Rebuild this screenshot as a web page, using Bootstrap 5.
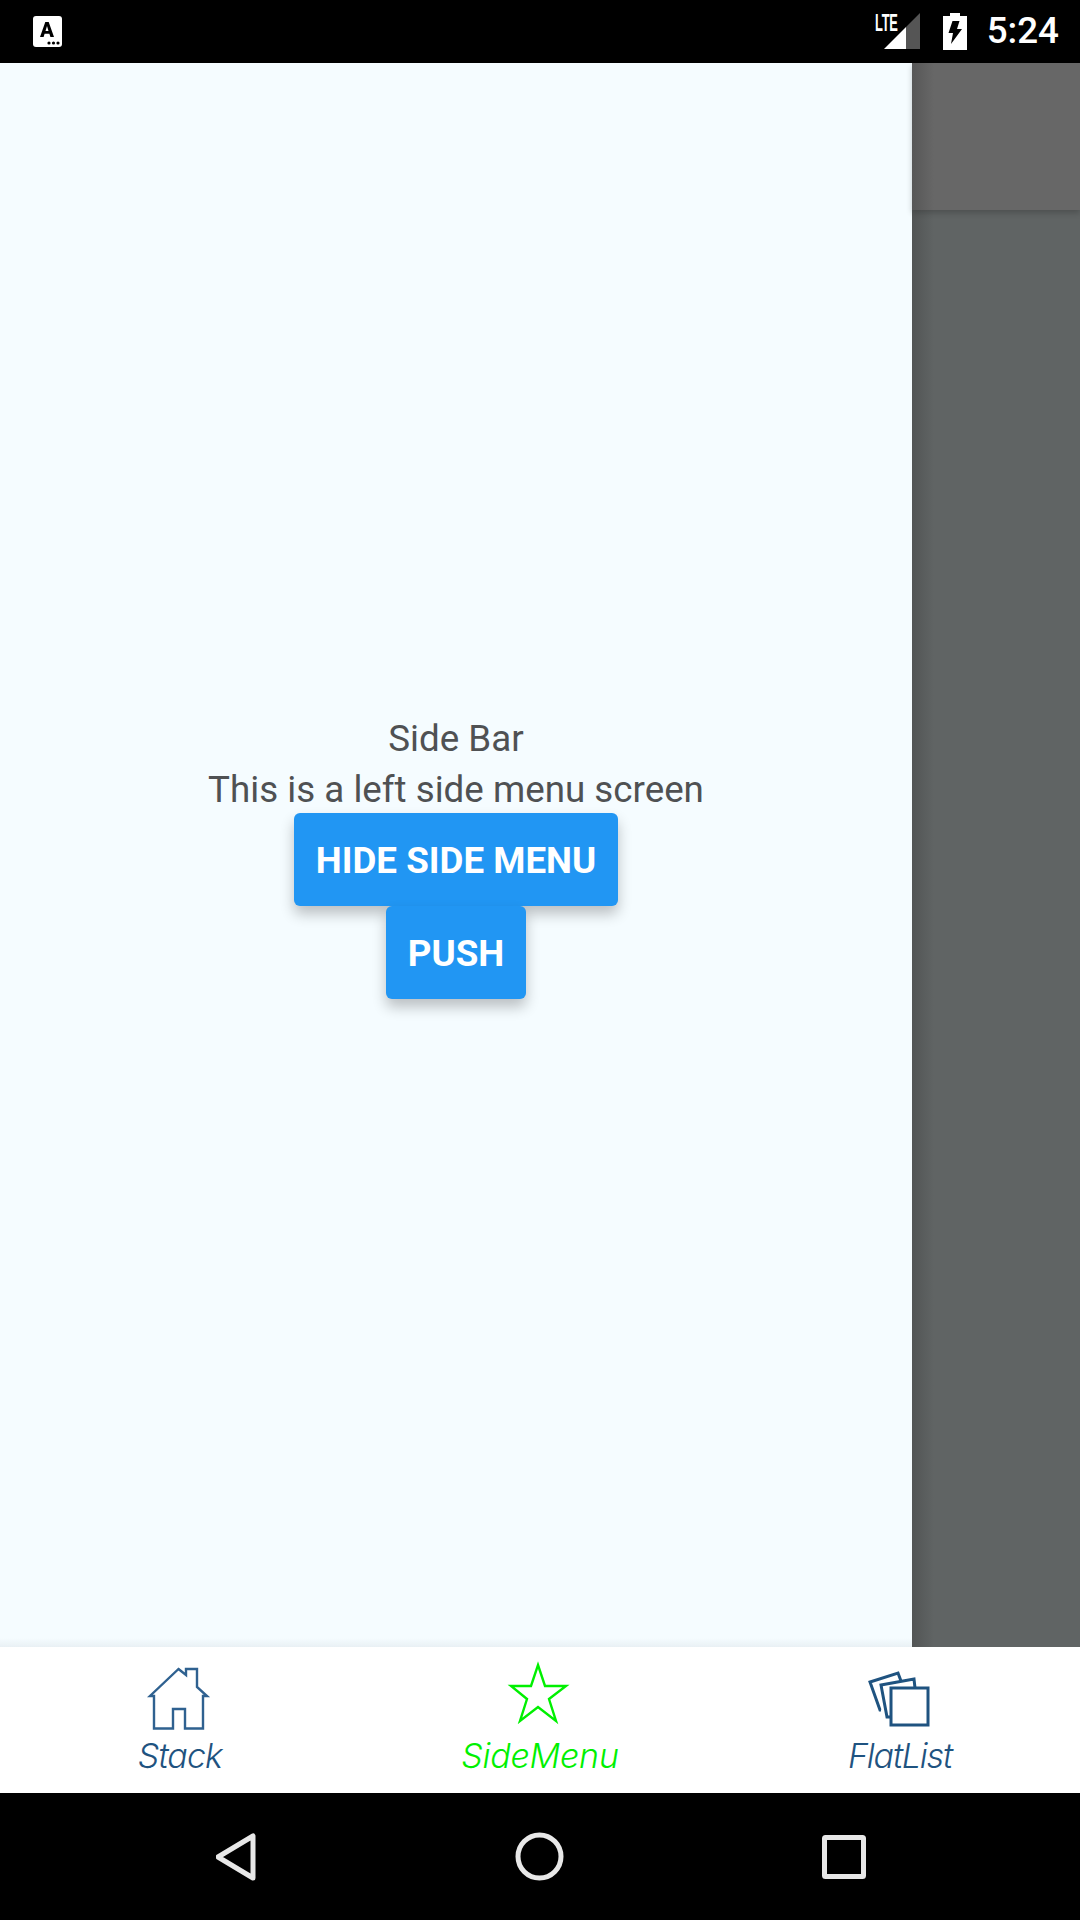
<!doctype html>
<html lang="en">
<head>
<meta charset="utf-8">
<title>Side Bar</title>
<link href="https://cdn.jsdelivr.net/npm/bootstrap@5.3.0/dist/css/bootstrap.min.css" rel="stylesheet">
<style>
html,body{margin:0;height:1920px;width:1080px;overflow:hidden;background:#000}
.app-shell{width:1080px;height:1920px}
.status-strip{height:63px;background:#000;color:#fff;padding:0 21px 0 33px}
.a-badge{width:29px;height:31px;margin-top:-1px}
.lte-group{position:relative;width:46px;height:37px;margin-right:22px}
.lte-label{position:absolute;left:0;top:-1px;font:700 23px/22px "Liberation Sans",sans-serif;letter-spacing:-.5px;transform:scaleX(.56);transform-origin:left top;color:#fff}
.clock{font:500 36.75px/1 Roboto,sans-serif;color:#fff;margin-left:20px}
.stage{flex:1 1 0;min-height:0}
.drawer-pane{width:912px;background:#f5fcff;position:relative}
.drawer-pane::after{content:"";position:absolute;left:0;right:0;bottom:0;height:9px;background:linear-gradient(to bottom,rgba(150,160,170,0),rgba(150,160,170,.13))}
.drawer-line{font:400 36.75px/46px Roboto,sans-serif;padding-top:5px;color:#4f5153;text-align:center}
.action-btn{background:#2196f3;color:#fff;border:0;border-radius:6px;font:700 36.75px/1 Roboto,sans-serif;padding:3px 22px 0;height:93px;text-transform:uppercase;box-shadow:0 8px 14px rgba(0,0,0,.24)}
.action-btn:hover,.action-btn:active{background:#2196f3!important;color:#fff!important}
.scrim-pane{flex:1 1 0;background:#606464;position:relative}
.scrim-pane::before{content:"";position:absolute;left:0;top:0;bottom:0;width:22px;background:linear-gradient(to right,rgba(50,50,50,.3),rgba(50,50,50,0));z-index:2}
.scrim-head{height:147px;background:#676767;box-shadow:0 3px 6px rgba(0,0,0,.2);position:relative}
.tab-strip{height:146px;background:#fff}
.tab-cell{height:146px;padding-top:13px}
.tab-word{font:italic 300 34px/40px Inter,"Liberation Sans",sans-serif;color:#1f5380;margin-top:6px;letter-spacing:-.9px}
.tab-on{color:#00f000;letter-spacing:-.2px}
.tab-tight{letter-spacing:-1.2px}
.sys-nav{height:127px;background:#000;padding:0 214px 0 216px}
</style>
</head>
<body>
<div class="app-shell d-flex flex-column">
  <div class="status-strip d-flex align-items-center">
    <svg class="a-badge" viewBox="0 0 29 31"><rect width="29" height="31" rx="3" fill="#fff"/><path d="M7 21 12.3 6h3.4L21 21h-3.600l-1-3.200h-4.800l-1 3.200zM12.500 15h3l-1.500-5z" fill="#000"/><circle cx="16" cy="27" r="1.600"/><circle cx="20.500" cy="27" r="1.600"/><circle cx="25" cy="27" r="1.600"/></svg>
    <div class="ms-auto d-flex align-items-center">
      <div class="lte-group">
        <span class="lte-label">LTE</span>
        <svg width="46" height="37" viewBox="0 0 46 37" class="d-block"><path d="M45 0V36H31V14z" fill="#555"/><path d="M9 36 31 14V36z" fill="#fff"/></svg>
      </div>
      <svg width="24" height="37" viewBox="0 0 24 37" class="d-block"><path d="M7 0h10v3h7v34H0V3h7z" fill="#fff"/><path d="M9.500 8h7l-2.500 8h5L8 31l2-11H5.500z" fill="#000"/></svg>
      <span class="clock">5:24</span>
    </div>
  </div>
  <div class="stage d-flex">
    <div class="drawer-pane d-flex flex-column justify-content-center align-items-center">
      <div class="drawer-line">Side Bar</div>
      <div class="drawer-line">This is a left side menu screen</div>
      <button type="button" class="btn action-btn">Hide Side Menu</button>
      <button type="button" class="btn action-btn">Push</button>
    </div>
    <div class="scrim-pane"><div class="scrim-head"></div></div>
  </div>
  <div class="tab-strip row g-0">
    <div class="col-4 tab-cell d-flex flex-column align-items-center">
      <svg width="70" height="70" viewBox="145 1660 70 70" class="d-block" fill="none" stroke="#2f6190" stroke-width="2.400" stroke-linejoin="miter"><path d="M178.500 1669 186 1675V1669H197V1687L207 1696H203V1728.500H185V1709H173V1728.500H154V1696H150Z"/></svg>
      <div class="tab-word">Stack</div>
    </div>
    <div class="col-4 tab-cell d-flex flex-column align-items-center">
      <svg width="70" height="70" viewBox="505 1660 70 70" class="d-block" fill="none" stroke="#00f000" stroke-width="2.400"><path d="M538 1665 545 1686H566L549 1699 556 1721 538 1707 520 1721 527 1699 511 1686H531Z"/></svg>
      <div class="tab-word tab-on">SideMenu</div>
    </div>
    <div class="col-4 tab-cell d-flex flex-column align-items-center">
      <svg width="70" height="70" viewBox="865 1660 70 70" class="d-block" fill="none" stroke="#1f5380" stroke-width="3"><rect x="891" y="1688" width="37" height="37"/><path d="M891 1717H887L881 1685 914 1679 915 1688"/><path d="M881 1710H880L870 1682 898 1673 901 1681"/></svg>
      <div class="tab-word tab-tight">FlatList</div>
    </div>
  </div>
  <div class="sys-nav d-flex align-items-center justify-content-between">
    <svg width="41" height="48" viewBox="0 0 41 48" fill="none" stroke="#e8e8e8" stroke-width="5" stroke-linejoin="round"><path d="M37 3V45L2 24Z"/></svg>
    <svg width="49" height="49" viewBox="0 0 49 49" fill="none" stroke="#e8e8e8" stroke-width="5"><circle cx="24.500" cy="24.500" r="21.500"/></svg>
    <svg width="44" height="44" viewBox="0 0 44 44" fill="none" stroke="#e8e8e8" stroke-width="5" stroke-linejoin="round"><rect x="2.500" y="2.500" width="39" height="39" rx="1"/></svg>
  </div>
</div>
</body>
</html>
